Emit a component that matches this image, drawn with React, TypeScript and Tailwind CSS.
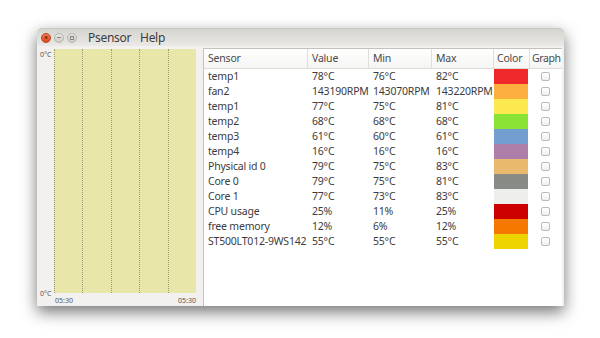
import React from "react";

const rows: [string, string, string, string, string][] = [
  ["temp1", "78°C", "76°C", "82°C", "#ef2929"],
  ["fan2", "143190RPM", "143070RPM", "143220RPM", "#fcaf3e"],
  ["temp1", "77°C", "75°C", "81°C", "#fce94f"],
  ["temp2", "68°C", "68°C", "68°C", "#8ae234"],
  ["temp3", "61°C", "60°C", "61°C", "#729fcf"],
  ["temp4", "16°C", "16°C", "16°C", "#ad7fa8"],
  ["Physical id 0", "79°C", "75°C", "83°C", "#e9b96e"],
  ["Core 0", "79°C", "75°C", "81°C", "#888a85"],
  ["Core 1", "77°C", "73°C", "83°C", "#eeeeec"],
  ["CPU usage", "25%", "11%", "25%", "#cc0000"],
  ["free memory", "12%", "6%", "12%", "#f57900"],
  ["ST500LT012-9WS142", "55°C", "55°C", "55°C", "#edd400"],
];

function Checkbox() {
  return (
    <div className="w-[9px] h-[9px] rounded-[2px] border border-[#bdbbb7] bg-gradient-to-b from-white to-[#f0efed]" />
  );
}

export default function App() {
  return (
    <div
      className="w-[600px] h-[338px] bg-white pl-[37px] pt-[28px]"
      style={{ fontFamily: '"Noto Sans", "Open Sans", sans-serif' }}
    >
      <div className="w-[527px] h-[278px] flex flex-col bg-[#f2f1f0] rounded-t-[5px] shadow-[0_6px_16px_rgba(0,0,0,0.55)]">
        {/* Title bar */}
        <div className="h-[18px] flex items-center rounded-t-[5px] bg-gradient-to-b from-[#d6d4cf] to-[#ebe9e5] border-t border-[#c9c7c2]">
          <div className="flex items-center gap-[3px] pl-[4px]">
            <div className="w-[10px] h-[10px] rounded-full bg-gradient-to-b from-[#f47a55] to-[#dd4814] border border-[#b0401f] flex items-center justify-center">
              <span className="text-[7px] leading-none text-[#5a1d0b] font-bold">×</span>
            </div>
            <div className="w-[10px] h-[10px] rounded-full bg-gradient-to-b from-[#e8e6e2] to-[#cfcdc8] border border-[#b5b3ae] flex items-center justify-center">
              <div className="w-[4px] h-[1px] bg-[#8a8883]" />
            </div>
            <div className="w-[10px] h-[10px] rounded-full bg-gradient-to-b from-[#e8e6e2] to-[#cfcdc8] border border-[#b5b3ae] flex items-center justify-center">
              <div className="w-[4px] h-[4px] border border-[#8a8883]" />
            </div>
          </div>
          <div className="flex gap-[9px] ml-[11px] text-[12px] leading-none text-[#3c3c3c] tracking-[-0.3px]">
            <span>Psensor</span>
            <span>Help</span>
          </div>
        </div>
        {/* Body */}
        <div className="flex-1 flex">
          {/* Graph pane */}
          <div className="w-[166px] flex pt-[3px] pr-[7px]">
            <div className="w-[17px] flex flex-col justify-between pl-[3px] pb-[9px] text-[7px] leading-none text-[#555]">
              <span className="pt-[2px]">0°C</span>
              <span>0°C</span>
            </div>
            <div className="flex-1 flex flex-col">
              <div className="flex-1 bg-[#e8e7a9] flex border-l border-dotted border-[#9a9970]">
                <div className="flex-1 border-r border-dotted border-[#9a9970]" />
                <div className="flex-1 border-r border-dotted border-[#9a9970]" />
                <div className="flex-1 border-r border-dotted border-[#9a9970]" />
                <div className="flex-1 border-r border-dotted border-[#9a9970]" />
                <div className="flex-1" />
              </div>
              <div className="h-[13px] flex justify-between items-center pl-[1px] pt-[2px] text-[7px] leading-none text-[#555]">
                <span>05:30</span>
                <span>05:30</span>
              </div>
            </div>
          </div>
          {/* Table pane */}
          <div className="flex-1 pt-[2px] pr-[2px] flex">
            <div className="flex-1 bg-white border-l border-t border-[#c4c2bd] text-[10.5px] tracking-[-0.2px] text-[#3c3c3c]">
              <div className="h-[20px] flex items-center border-b border-[#dedcd8] bg-gradient-to-b from-white to-[#f6f5f4] text-[#4a4a4a]">
                <div className="w-[104px] pl-[4px] border-r border-[#e0dedb] h-full flex items-center">Sensor</div>
                <div className="w-[61px] pl-[4px] border-r border-[#e0dedb] h-full flex items-center">Value</div>
                <div className="w-[63px] pl-[4px] border-r border-[#e0dedb] h-full flex items-center">Min</div>
                <div className="w-[62px] pl-[4px] border-r border-[#e0dedb] h-full flex items-center">Max</div>
                <div className="w-[36px] pl-[3px] border-r border-[#e0dedb] h-full flex items-center">Color</div>
                <div className="flex-1 pl-[2px] h-full flex items-center tracking-[-0.4px] whitespace-nowrap overflow-hidden">Graph</div>
              </div>
              {rows.map((r, i) => (
                <div key={i} className="h-[15px] flex items-center leading-none">
                  <div className="w-[104px] pl-[4px] whitespace-nowrap">{r[0]}</div>
                  <div className="w-[61px] pl-[4px] whitespace-nowrap">{r[1]}</div>
                  <div className="w-[63px] pl-[4px] whitespace-nowrap">{r[2]}</div>
                  <div className="w-[62px] pl-[4px] whitespace-nowrap">{r[3]}</div>
                  <div className="w-[36px] h-full pr-[2px]">
                    <div className="w-full h-full" style={{ backgroundColor: r[4] }} />
                  </div>
                  <div className="flex-1 flex justify-center pr-[1px]">
                    <Checkbox />
                  </div>
                </div>
              ))}
            </div>
          </div>
        </div>
      </div>
    </div>
  );
}
